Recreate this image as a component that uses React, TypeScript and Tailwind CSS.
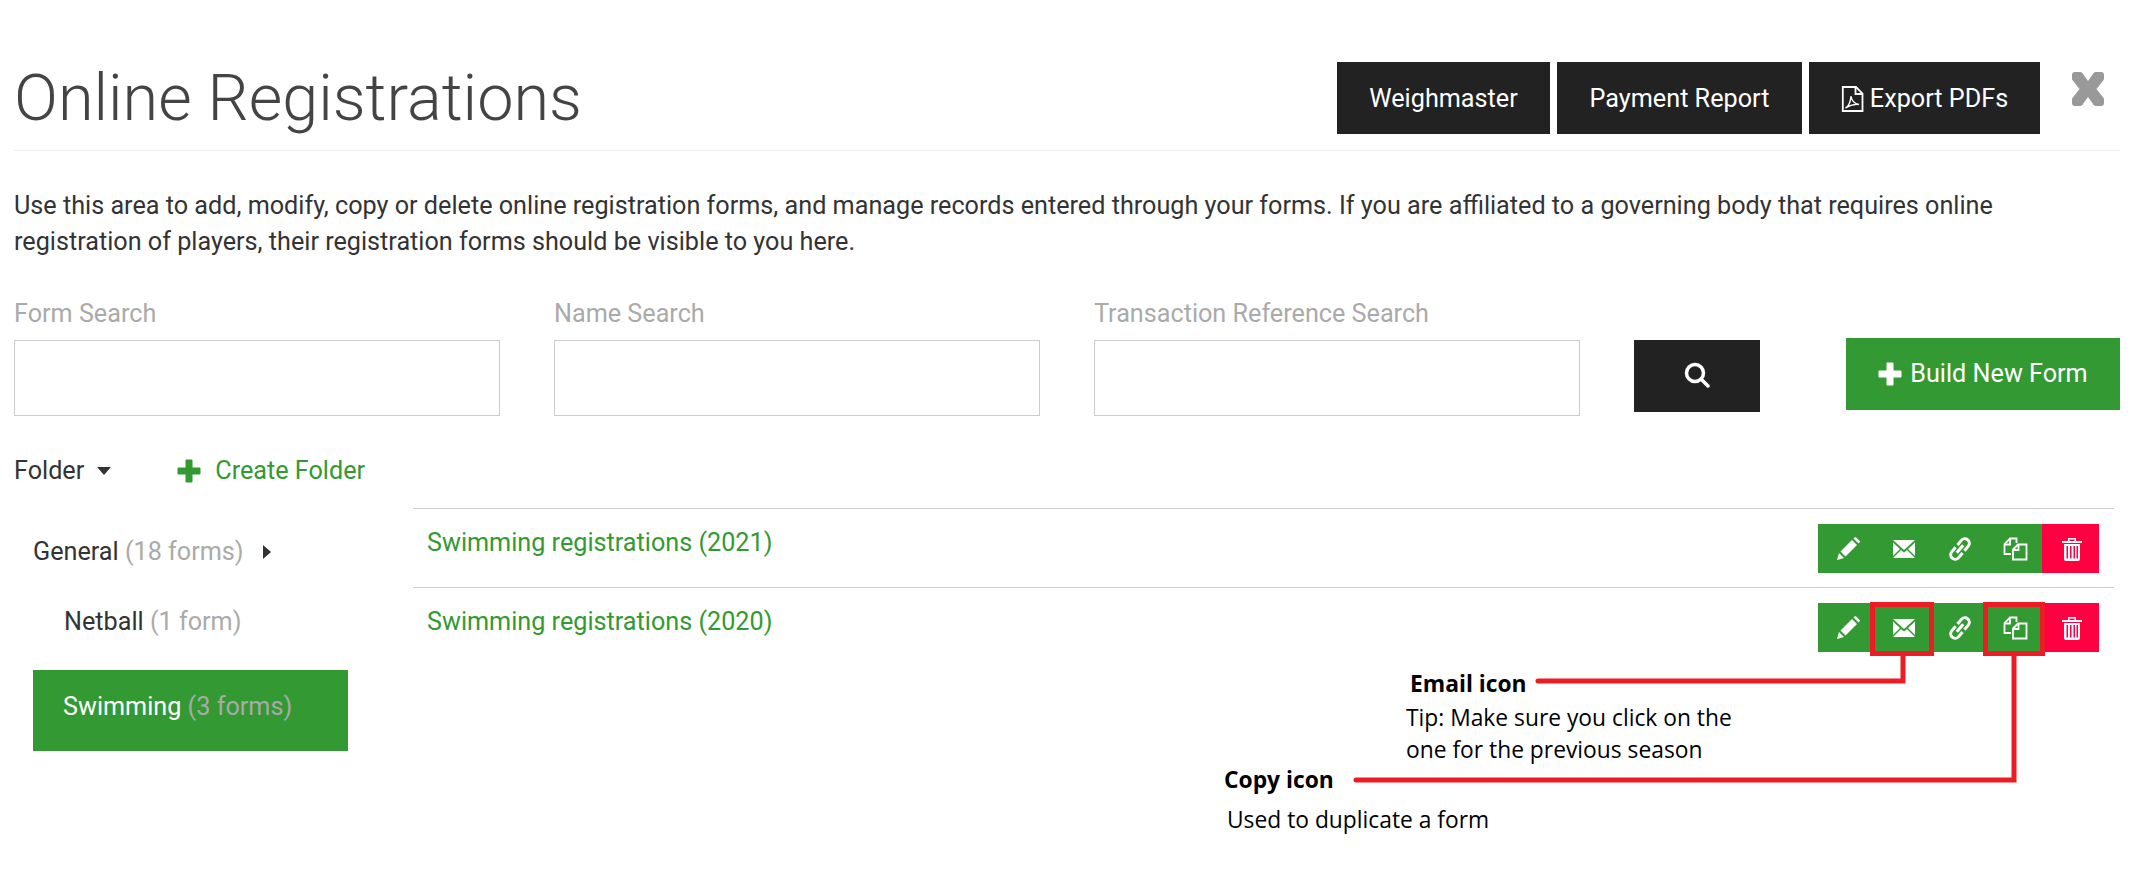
import React from 'react';

function PlusIcon({ className }: { className: string }) {
  return (
    <svg className={className} viewBox="0 0 24 24" fill="currentColor">
      <path d="M8.500 1.500a1 1 0 0 1 1-1h5a1 1 0 0 1 1 1v7h7a1 1 0 0 1 1 1v5a1 1 0 0 1-1 1h-7v7a1 1 0 0 1-1 1h-5a1 1 0 0 1-1-1v-7h-7a1 1 0 0 1-1-1v-5a1 1 0 0 1 1-1h7z" />
    </svg>
  );
}

function CloseIcon() {
  return (
    <svg width="36" height="34" viewBox="0 0 36 34" fill="#999" className="ml-[30px] mr-[14px] mt-[10px]">
      <path d="M5 0h5a3 3 0 0 1 2.500 1.300L18 9l5.500-7.700A3 3 0 0 1 26 0h5a3 3 0 0 1 3 3v3.500a3 3 0 0 1-.6 1.800L26.500 17l6.900 8.700a3 3 0 0 1 .6 1.800V31a3 3 0 0 1-3 3h-5a3 3 0 0 1-2.500-1.300L18 25l-5.500 7.700A3 3 0 0 1 10 34H5a3 3 0 0 1-3-3v-3.500a3 3 0 0 1 .6-1.800L9.500 17 2.600 8.300A3 3 0 0 1 2 6.500V3a3 3 0 0 1 3-3z" />
    </svg>
  );
}

function PdfIcon() {
  return (
    <svg width="23" height="26" viewBox="0 0 23 26" fill="none" stroke="white" strokeWidth="1.800">
      <path d="M1.800 1H15l6.500 6.500V25H1.800z" />
      <path d="M14.500 1v7h7" />
      <path d="M4.500 22c3-1.500 5-6 5.500-12 .5 4 3 7.500 8 8.500-4-.5-9 .5-13.500 3.500z" strokeWidth="1.400" />
    </svg>
  );
}

function PencilIcon() {
  return (
    <svg width="24" height="24" viewBox="0 0 24 24" fill="white">
      <path d="M1 23l2-7 5 5z" />
      <path d="M4.500 14.500L16 3l5 5L9.500 19.500z" />
      <path d="M17.500 1.500l1-1a1.200 1.200 0 0 1 1.700 0l3.300 3.300a1.200 1.200 0 0 1 0 1.700l-1 1z" />
    </svg>
  );
}

function MailIcon() {
  return (
    <svg width="24" height="20" viewBox="0 0 24 20" fill="white">
      <path d="M1 1h22L12 11z" />
      <path d="M1 3.500v13.500l7-7z" />
      <path d="M23 3.500v13.500l-7-7z" />
      <path d="M1 19h22l-8-8-3 2.500L9 11z" />
    </svg>
  );
}

function LinkIcon() {
  return (
    <svg width="24" height="26" viewBox="0 0 24 26" fill="none" stroke="white" strokeWidth="3">
      <g transform="translate(12 13) rotate(40)">
        <path d="M-4.500 -1.500V-7.500a4.500 4.500 0 0 1 9 0V-1.500" />
        <path d="M-4.500 1.500V7.500a4.500 4.500 0 0 0 9 0V1.500" />
        <path d="M0 -5V5" />
      </g>
    </svg>
  );
}

function CopyIcon() {
  return (
    <svg width="25" height="24" viewBox="0 0 25 24" fill="none" stroke="white" strokeWidth="1.800">
      <path d="M8 17H1.500V7L7 1.500h6.500V6" />
      <path d="M1.500 7.500H7V1.500" />
      <path d="M10 12.500L15 7.500h8.500v15H10z" />
      <path d="M10 13h5.500V7.500" />
    </svg>
  );
}

function TrashIcon() {
  return (
    <svg width="22" height="24" viewBox="0 0 22 24" fill="white">
      <path d="M1 4h20v2H1z" />
      <path d="M7 4V1h8v3h-1.500V2.500h-5V4z" />
      <path d="M3 7h16v15a2 2 0 0 1-2 2H5a2 2 0 0 1-2-2zm2.500 2v12.500h1.500V9zm3.500 0v12.500h1.500V9zm3.500 0v12.500H14V9zm3 0v12.500H17V9z" fillRule="evenodd" />
    </svg>
  );
}

function SearchIcon() {
  return (
    <svg width="26" height="26" viewBox="0 0 26 26" fill="none" stroke="white" strokeWidth="3.500" strokeLinecap="round">
      <circle cx="11" cy="11" r="8.500" />
      <path d="M17.500 17.500L24 24" />
    </svg>
  );
}

function RowActions() {
  return (
    <div className="flex h-[49px]">
      <div className="flex bg-[#339933]">
        <span className="w-[56px] pl-[3px] flex items-center justify-center"><PencilIcon /></span>
        <span className="w-[56px] pl-[3px] flex items-center justify-center"><MailIcon /></span>
        <span className="w-[56px] pl-[3px] flex items-center justify-center"><LinkIcon /></span>
        <span className="w-[56px] pl-[2px] flex items-center justify-center"><CopyIcon /></span>
      </div>
      <span className="w-[57px] pl-[2px] flex items-center justify-center bg-[#ff0040]"><TrashIcon /></span>
    </div>
  );
}

function FormRow({ name }: { name: string }) {
  return (
    <div className="h-[79px] border-t border-[#ccc] pl-[14px] pr-[15px] flex items-start justify-between">
      <a className="text-[#339933] mt-[16px] leading-9">{name}</a>
      <div className="mt-[15px]"><RowActions /></div>
    </div>
  );
}

function SearchField({ label }: { label: string }) {
  return (
    <div>
      <div className="text-[#aaa] leading-9 pt-[1px] mb-[8px]">{label}</div>
      <input className="block w-full h-[76px] border border-[#ccc] bg-white" />
    </div>
  );
}

export default function App() {
  return (
    <div className="relative min-h-[871px] bg-white pl-[14px] pr-[17px] pt-[62px] text-[25.2px] text-[#333] font-['Roboto',sans-serif] overflow-hidden">
      {/* header */}
      <div className="flex items-start justify-between border-b border-[#eee] pb-[16px]">
        <h1 className="text-[64.8px] leading-[72px] font-light text-[#444]">Online Registrations</h1>
        <div className="flex items-start">
          <div className="flex gap-[7px]">
            <button className="w-[213px] h-[72px] pt-[2px] bg-[#222] text-white">Weighmaster</button>
            <button className="w-[245px] h-[72px] pt-[2px] bg-[#222] text-white">Payment Report</button>
            <button className="w-[231px] h-[72px] pt-[2px] bg-[#222] text-white flex items-center justify-center gap-[6px]">
              <PdfIcon /> Export PDFs
            </button>
          </div>
          <CloseIcon />
        </div>
      </div>

      <p className="mt-[37px] leading-9">
        Use this area to add, modify, copy or delete online registration forms, and manage records entered through your forms. If you are affiliated to a governing body that requires online registration of players, their registration forms should be visible to you here.
      </p>

      {/* search row */}
      <div className="flex items-start mt-[35px]">
        <div className="grid grid-cols-3 gap-[54px] w-[1566px]">
          <SearchField label="Form Search" />
          <SearchField label="Name Search" />
          <SearchField label="Transaction Reference Search" />
        </div>
        <button className="ml-[54px] mt-[45px] w-[126px] h-[72px] pb-[3px] bg-[#222] flex items-center justify-center"><SearchIcon /></button>
        <button className="ml-[86px] mt-[43px] w-[274px] h-[72px] bg-[#339933] text-white flex items-center justify-center gap-[8px]">
          <PlusIcon className="w-[24px] h-[24px]" /> Build New Form
        </button>
      </div>

      {/* folder controls */}
      <div className="flex items-center mt-[37px] leading-9">
        <span>Folder</span>
        <span className="ml-[13px] border-x-[7px] border-t-[8px] border-x-transparent border-t-[#333]" />
        <PlusIcon className="text-[#339933] ml-[66px] w-[24px] h-[24px]" />
        <a className="text-[#339933] ml-[14px]">Create Folder</a>
      </div>

      <div className="flex mt-[19px]">
        {/* folders */}
        <div className="w-[399px] shrink-0">
          <div className="pl-[19px] pt-[26px] leading-9 flex items-center">
            <span>General <span className="text-[#aaa]">(18 forms)</span></span>
            <span className="ml-[19px] border-y-[7px] border-l-[8px] border-y-transparent border-l-[#333]" />
          </div>
          <div className="pl-[50px] mt-[34px] leading-9">Netball <span className="text-[#aaa]">(1 form)</span></div>
          <div className="ml-[19px] w-[315px] h-[81px] mt-[30px] bg-[#339933] text-white pl-[30px] pb-[8px] flex items-center">
            <span>Swimming <span className="text-[#aaa]">(3 forms)</span></span>
          </div>
        </div>
        {/* forms */}
        <div className="w-[1701px]">
          <FormRow name="Swimming registrations (2021)" />
          <FormRow name="Swimming registrations (2020)" />
        </div>
      </div>

      {/* annotation overlay */}
      <svg className="absolute left-0 top-0 pointer-events-none" width="2137" height="871" fill="none" stroke="#ed1c24" strokeWidth="5">
        <rect x="1872.500" y="604.500" width="59" height="49" />
        <rect x="1985.500" y="604.500" width="57" height="49" />
        <path d="M1903 656V681H1538" strokeLinecap="round" />
        <path d="M2014 656V780H1356" strokeLinecap="round" />
      </svg>
      <div className="absolute left-[1410px] top-[669px] text-[22.800px] leading-[30px] font-bold text-black font-['Open_Sans',sans-serif]">Email icon</div>
      <div className="absolute left-[1406px] top-[702px] text-[22.800px] leading-[32px] text-black font-['Open_Sans',sans-serif]">
        Tip: Make sure you click on the<br />one for the previous season
      </div>
      <div className="absolute left-[1224px] top-[765px] text-[22.800px] leading-[30px] font-bold text-black font-['Open_Sans',sans-serif]">Copy icon</div>
      <div className="absolute left-[1227px] top-[804px] text-[22.800px] leading-[32px] text-black font-['Open_Sans',sans-serif]">Used to duplicate a form</div>
    </div>
  );
}
